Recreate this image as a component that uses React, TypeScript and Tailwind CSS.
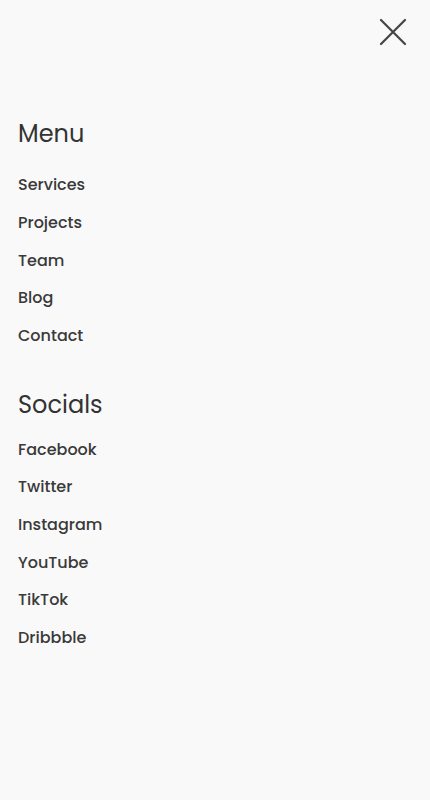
import React from "react";

const menu = ["Services", "Projects", "Team", "Blog", "Contact"];
const socials = ["Facebook", "Twitter", "Instagram", "YouTube", "TikTok", "Dribbble"];

export default function App() {
  return (
    <div className="w-[430px] h-[800px] bg-[#f9f9f9] text-[#333333] font-['Poppins','Open_Sans',sans-serif] overflow-hidden">
      <div className="flex justify-end pt-[14px] pr-[19px]">
        <button aria-label="Close" className="w-9 h-9 flex items-center justify-center text-[#444444]">
          <svg width="28" height="28" viewBox="0 0 28 28" fill="none" stroke="currentColor" strokeWidth="2.2" strokeLinecap="round">
            <path d="M2 2 L26 26 M26 2 L2 26" />
          </svg>
        </button>
      </div>
      <nav className="pl-[18px] pt-[68px]">
        <h2 className="text-[24px] leading-[32px] font-normal">Menu</h2>
        <ul className="mt-[16px] flex flex-col">
          {menu.map((m) => (
            <li key={m} className="text-[16px] leading-[37.75px] font-medium text-[#3a3a3a]">
              {m}
            </li>
          ))}
        </ul>
        <h2 className="mt-[34px] text-[24px] leading-[32px] font-normal">Socials</h2>
        <ul className="mt-[10px] flex flex-col">
          {socials.map((m) => (
            <li key={m} className="text-[16px] leading-[37.6px] font-medium text-[#3a3a3a]">
              {m}
            </li>
          ))}
        </ul>
      </nav>
    </div>
  );
}
